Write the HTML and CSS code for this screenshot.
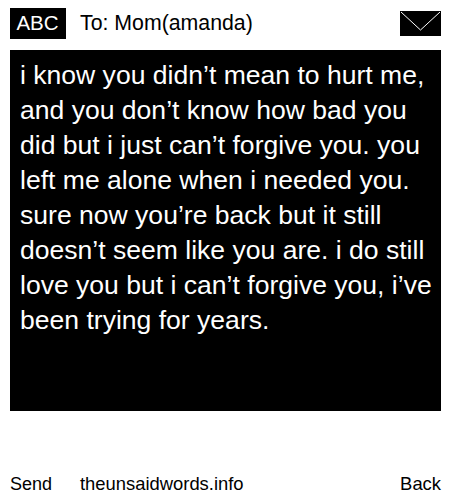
FILE: index.html
```html
<!DOCTYPE html>
<html lang="en">
<head>
<meta charset="utf-8">
<title>The Unsaid Words</title>
<link rel="stylesheet" href="styles.css">
</head>
<body>
<div class="phone">
  <header class="top">
    <span class="mode">ABC</span>
    <span class="to">To: Mom(amanda)</span>
    <svg class="env" width="41" height="25" viewBox="0 0 41 25" aria-hidden="true">
      <rect width="41" height="25" fill="#000"/>
      <path d="M1 1 L20.5 19 L40 1" fill="none" stroke="#fff" stroke-width="1"/>
    </svg>
  </header>
  <main class="msg">i know you didn’t mean to hurt me, and you don’t know how bad you did but i just can’t forgive you. you left me alone when i needed you. sure now you’re back but it still doesn’t seem like you are. i do still love you but i can’t forgive you, i’ve been trying for years.</main>
  <footer class="bottom">
    <span class="send">Send</span>
    <span class="site">theunsaidwords.info</span>
    <span class="back">Back</span>
  </footer>
</div>
</body>
</html>
```
FILE: styles.css
```css
html, body { margin: 0; padding: 0; background: #fff; }
body { font-family: "Liberation Sans", Arial, sans-serif; color: #000; }
.phone { width: 450px; height: 500px; box-sizing: border-box; padding: 8px 9px 0 10px; display: flex; flex-direction: column; }
.top { display: flex; align-items: center; height: 31px; font-size: 21.3px; }
.mode { background: #000; color: #fff; width: 55px; height: 31px; padding-right: 1px; line-height: 29px; text-align: center; font-size: 20.5px; }
.to { margin-left: 14px; flex: 1; }
.env { display: block; }
.msg { margin-top: 11px; height: 361px; box-sizing: border-box; background: #000; color: #fff; font-size: 26.55px; line-height: 35px; padding: 8px 2px 8px 10px; }
.bottom { margin-top: 61px; display: flex; font-size: 18.4px; line-height: 24px; }
.send { width: 70px; font-size: 18px; }
.site { flex: 1; }
```
